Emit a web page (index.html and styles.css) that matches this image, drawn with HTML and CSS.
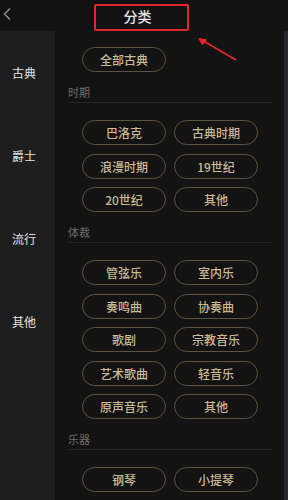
FILE: index.html
```html
<!DOCTYPE html>
<html lang="zh">
<head>
<meta charset="utf-8">
<link rel="stylesheet" href="styles.css">
</head>
<body>
<div class="app">
  <header class="topbar">
    <svg class="back" width="10" height="14" viewBox="0 0 10 14"><path d="M8 1.5 L2.5 7 L8 12.5" fill="none" stroke="#8a8a8a" stroke-width="1.5"/></svg>
    <div class="title-box"><span class="title">分类</span></div>
  </header>
  <div class="content">
    <nav class="sidebar">
      <div class="side-item">古典</div>
      <div class="side-item">爵士</div>
      <div class="side-item">流行</div>
      <div class="side-item">其他</div>
    </nav>
    <main class="main">
      <div class="grid first">
        <div class="tag">全部古典</div>
      </div>
      <div class="sec-title">时期</div>
      <div class="grid">
        <div class="tag">巴洛克</div>
        <div class="tag">古典时期</div>
        <div class="tag">浪漫时期</div>
        <div class="tag">19世纪</div>
        <div class="tag">20世纪</div>
        <div class="tag">其他</div>
      </div>
      <div class="sec-title">体裁</div>
      <div class="grid">
        <div class="tag">管弦乐</div>
        <div class="tag">室内乐</div>
        <div class="tag">奏鸣曲</div>
        <div class="tag">协奏曲</div>
        <div class="tag">歌剧</div>
        <div class="tag">宗教音乐</div>
        <div class="tag">艺术歌曲</div>
        <div class="tag">轻音乐</div>
        <div class="tag">原声音乐</div>
        <div class="tag">其他</div>
      </div>
      <div class="sec-title">乐器</div>
      <div class="grid">
        <div class="tag">钢琴</div>
        <div class="tag">小提琴</div>
      </div>
    </main>
    <div class="scroll-strip"></div>
  </div>
  <svg class="arrow" width="50" height="34" viewBox="0 0 50 34"><path d="M40 24 L4 3" stroke="#e8262a" stroke-width="1.6" fill="none"/><path d="M2 2 L11 3.5 L6.5 9.5 Z" fill="#e8262a"/></svg>
</div>
</body>
</html>
```
FILE: styles.css
```css
html, body {
  margin: 0;
  padding: 0;
  background: #131313;
}
body {
  width: 288px;
  height: 500px;
  overflow: hidden;
  font-family: "Noto Sans CJK SC", "Noto Sans", sans-serif;
}
.app {
  position: relative;
  width: 288px;
  height: 500px;
  display: flex;
  flex-direction: column;
}
.topbar {
  height: 31px;
  flex: none;
  background: #121212;
  display: flex;
  align-items: center;
  position: relative;
}
.back {
  position: absolute;
  left: 2px;
  top: 7px;
}
.title-box {
  margin-left: 94px;
  margin-top: 4px;
  width: 91px;
  height: 23px;
  border: 2px solid #e3262b;
  border-radius: 2px;
  display: flex;
  align-items: center;
  justify-content: center;
  align-self: flex-start;
}
.title {
  color: #e6e6e6;
  font-size: 14px;
  font-weight: 500;
  margin-left: -8px;
  margin-top: -4px;
}
.content {
  flex: 1;
  display: flex;
  min-height: 0;
}
.sidebar {
  width: 55px;
  flex: none;
  background: #1e1e1e;
  display: flex;
  flex-direction: column;
}
.side-item {
  height: 82px;
  border-bottom: 1px solid #212121;
  display: flex;
  align-items: center;
  padding-left: 12px;
  color: #e2e2e2;
  font-size: 12px;
}
.main {
  flex: 1;
  padding: 16px 12px 0 13px;
  overflow: hidden;
}
.scroll-strip {
  width: 4px;
  flex: none;
  background: #25252c;
}
.grid {
  width: 176px;
  margin: 17px auto 0;
  display: grid;
  grid-template-columns: 84px 84px;
  column-gap: 8px;
  row-gap: 8.5px;
}
.grid.first {
  margin-top: 0;
}
.tag {
  height: 23px;
  border: 1px solid #5d5140;
  border-radius: 13px;
  color: #cbb994;
  font-size: 12px;
  font-weight: 500;
  line-height: 23px;
  text-align: center;
}
.sec-title {
  padding: 13px 0 3px;
  font-size: 11px;
  line-height: 14px;
  color: #6e6e6e;
  border-bottom: 1px solid #262626;
}
.arrow {
  position: absolute;
  left: 196px;
  top: 36px;
}
```
